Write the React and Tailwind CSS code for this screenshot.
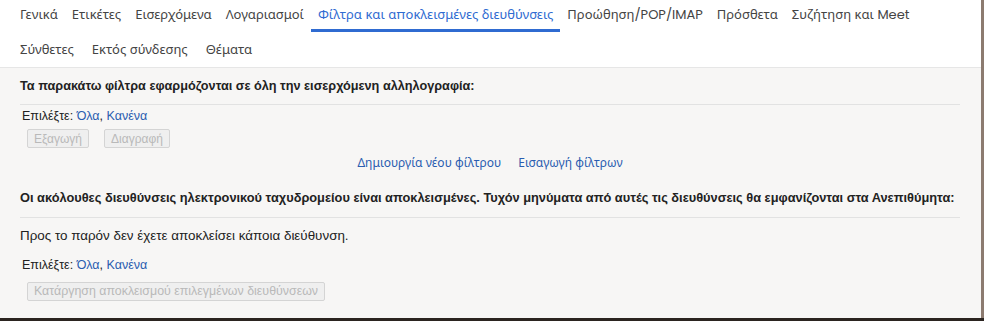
import React from "react";

const topTabs = [
    "Γενικά",
    "Ετικέτες",
    "Εισερχόμενα",
    "Λογαριασμοί",
    "Φίλτρα και αποκλεισμένες διευθύνσεις",
    "Προώθηση/POP/IMAP",
    "Πρόσθετα",
    "Συζήτηση και Meet",
];
const moreTabs = ["Σύνθετες", "Εκτός σύνδεσης", "Θέματα"];
const activeTab = "Φίλτρα και αποκλεισμένες διευθύνσεις";

const tabFont = { fontFamily: "Poppins, 'Noto Sans', sans-serif" };

function Tab({ label }) {
    const active = label === activeTab;
    return (
        <div
            className={`px-[7px] h-[32px] flex items-center text-[13px] border-b-[3px] ${
                active ? "text-[#2f6bd1] border-[#2f6bd1]" : "text-[#444] border-transparent"
            }`}
        >
            {label}
        </div>
    );
}

function DisabledButton({ children }) {
    return (
        <button
            disabled
            className="h-[19px] px-[6px] text-[12px] leading-none text-[#b9b9b9] bg-[#efefef] border border-[#d4d4d4] rounded-[2px]"
        >
            {children}
        </button>
    );
}

function SelectLine() {
    return (
        <div className="pl-[2px] text-[12.5px] leading-[16px] text-[#222]">
            Επιλέξτε: <span className="text-[#2a5db0]">Όλα</span>,{" "}
            <span className="text-[#2a5db0]">Κανένα</span>
        </div>
    );
}

export default function App() {
    return (
        <div className="w-[984px] h-[321px] bg-[#2b2420] flex flex-col overflow-hidden">
            <div className="flex flex-1 min-h-0">
                <div className="flex-1 flex flex-col bg-[#f7f6f5]" style={{ fontFamily: "Arial, 'Liberation Sans', sans-serif" }}>
                    {/* Tabs */}
                    <div className="bg-white border-b border-[#e6e6e6] pl-[13px]" style={tabFont}>
                        <div className="flex">
                            {topTabs.map((t) => (
                                <Tab key={t} label={t} />
                            ))}
                        </div>
                        <div className="flex h-[35px] items-center">
                            {moreTabs.map((t) => (
                                <div key={t} className="px-[9px] text-[13px] text-[#444] first:pl-[7px]">
                                    {t}
                                </div>
                            ))}
                        </div>
                    </div>

                    {/* Filters */}
                    <div className="pl-[20px] pr-[21px] flex flex-col">
                        <div className="pt-[10px] pb-[10px] text-[12.7px] leading-[16px] font-bold text-[#222] border-b border-[#e2e2e2]">
                            Τα παρακάτω φίλτρα εφαρμόζονται σε όλη την εισερχόμενη αλληλογραφία:
                        </div>
                        <div className="pt-[3px]">
                            <SelectLine />
                            <div className="flex gap-[15px] pl-[7px] mt-[5px]">
                                <DisabledButton>Εξαγωγή</DisabledButton>
                                <DisabledButton>Διαγραφή</DisabledButton>
                            </div>
                        </div>
                        <div className="flex justify-center gap-[17px] mt-[7px] text-[12px] leading-[16px] text-[#2a5db0]" style={tabFont}>
                            <span>Δημιουργία νέου φίλτρου</span>
                            <span>Εισαγωγή φίλτρων</span>
                        </div>

                        {/* Blocked addresses */}
                        <div className="mt-[19px] pb-[11px] text-[12.8px] leading-[16px] font-bold text-[#222] border-b border-[#e2e2e2]">
                            Οι ακόλουθες διευθύνσεις ηλεκτρονικού ταχυδρομείου είναι αποκλεισμένες. Τυχόν μηνύματα από αυτές τις διευθύνσεις θα εμφανίζονται στα Ανεπιθύμητα:
                        </div>
                        <div className="pt-[10px] text-[13.4px] leading-[16px] text-[#222]">
                            Προς το παρόν δεν έχετε αποκλείσει κάποια διεύθυνση.
                        </div>
                        <div className="mt-[13px]">
                            <SelectLine />
                            <div className="pl-[7px] mt-[5px]">
                                <DisabledButton>
                                    <span className="text-[12.4px]">Κατάργηση αποκλεισμού επιλεγμένων διευθύνσεων</span>
                                </DisabledButton>
                            </div>
                        </div>
                    </div>
                </div>
                <div className="w-[3px] bg-[#8c7b70]" />
            </div>
            <div className="h-[3px] bg-[#2b2420]" />
        </div>
    );
}
